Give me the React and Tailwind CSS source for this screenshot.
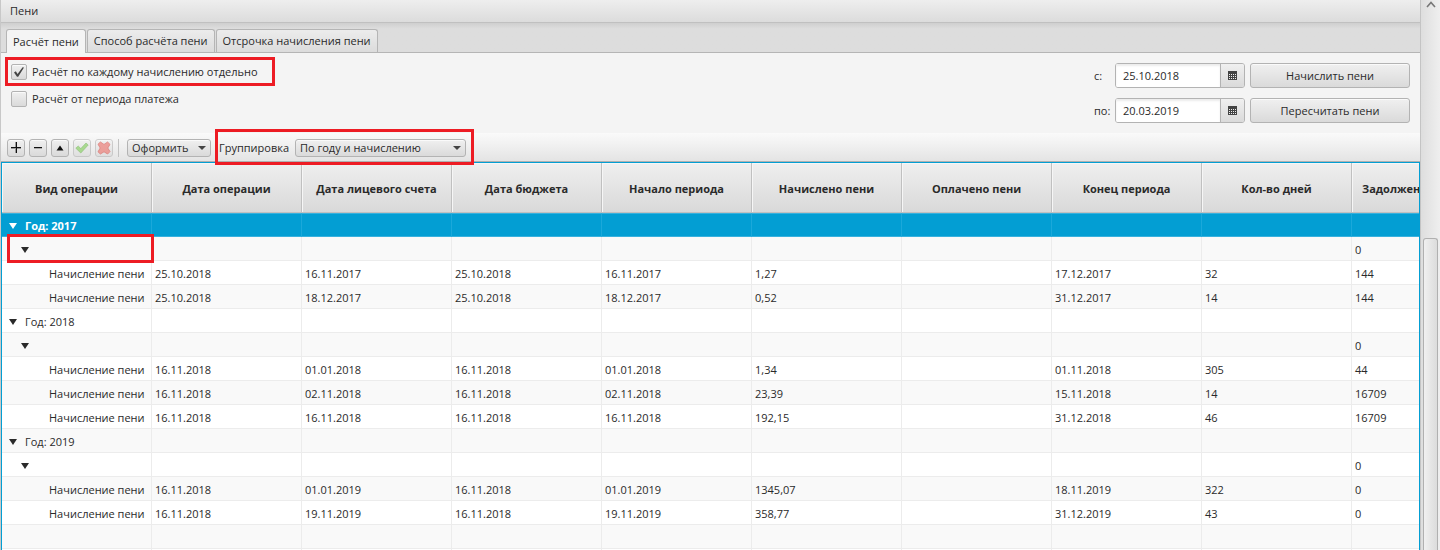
import { useState } from "react";

const columns = [
  "Вид операции",
  "Дата операции",
  "Дата лицевого счета",
  "Дата бюджета",
  "Начало периода",
  "Начислено пени",
  "Оплачено пени",
  "Конец периода",
  "Кол-во дней",
  "Задолженность",
];

const op = "Начисление пени";
const rows = [
  { kind: "year", label: "Год: 2017", selected: true },
  { kind: "group", marked: true },
  { kind: "item", cells: ["25.10.2018", "16.11.2017", "25.10.2018", "16.11.2017", "1,27", "", "17.12.2017", "32", "144"] },
  { kind: "item", cells: ["25.10.2018", "18.12.2017", "25.10.2018", "18.12.2017", "0,52", "", "31.12.2017", "14", "144"] },
  { kind: "year", label: "Год: 2018" },
  { kind: "group" },
  { kind: "item", cells: ["16.11.2018", "01.01.2018", "16.11.2018", "01.01.2018", "1,34", "", "01.11.2018", "305", "44"] },
  { kind: "item", cells: ["16.11.2018", "02.11.2018", "16.11.2018", "02.11.2018", "23,39", "", "15.11.2018", "14", "16709"] },
  { kind: "item", cells: ["16.11.2018", "16.11.2018", "16.11.2018", "16.11.2018", "192,15", "", "31.12.2018", "46", "16709"] },
  { kind: "year", label: "Год: 2019" },
  { kind: "group" },
  { kind: "item", cells: ["16.11.2018", "01.01.2019", "16.11.2018", "01.01.2019", "1345,07", "", "18.11.2019", "322", "0"] },
  { kind: "item", cells: ["16.11.2018", "19.11.2019", "16.11.2018", "19.11.2019", "358,77", "", "31.12.2019", "43", "0"] },
  { kind: "empty" },
  { kind: "empty" },
];

const face = "border border-[#b3b3b3] bg-linear-to-b from-[#f0f0f0] to-[#dadada] shadow-[inset_0_1px_0_#fafafa]";

function Highlight({ className }) {
  return <span aria-hidden="true" className={`pointer-events-none absolute z-10 border-3 border-[#ed1c24] ${className}`} />;
}

function Down({ className = "" }) {
  return (
    <svg width="8" height="6" viewBox="0 0 8 6" className={className} aria-hidden="true">
      <path d="M0 0h8L4 6z" fill="currentColor" />
    </svg>
  );
}

function SmallDown({ className = "" }) {
  return (
    <svg width="8" height="4" viewBox="0 0 8 4" className={className} aria-hidden="true">
      <path d="M0 0h8L4 4z" fill="currentColor" />
    </svg>
  );
}

function CheckRow({ id, label, checked, onChange, marked }) {
  return (
    <div className="relative flex h-[27px] items-center gap-[5px] self-start">
      <span className="relative flex size-4">
        <input
          id={id}
          type="checkbox"
          checked={checked}
          onChange={onChange}
          className={`size-4 appearance-none rounded-[2px] ${face}`}
        />
        {checked && (
          <svg viewBox="0 0 16 16" className="pointer-events-none absolute inset-0 size-4" aria-hidden="true">
            <path d="M3 8.4 4.8 7.2 6.6 10 11.6 3.2 13 3.6 7.2 12.8H6z" fill="#444" />
          </svg>
        )}
      </span>
      <label htmlFor={id} className="min-w-[232px]">{label}</label>
      {marked && <Highlight className="-top-px -right-[11px] bottom-[-1px] -left-[6px]" />}
    </div>
  );
}

function DateField({ id, label, value }) {
  return (
    <div className="flex items-center">
      <label htmlFor={id} className="w-[21px]">{label}</label>
      <div className="flex h-[25px] w-[130px] overflow-hidden rounded-[3px] border border-[#b3b3b3]">
        <input
          id={id}
          defaultValue={value}
          className="min-w-0 flex-1 bg-white px-[7px] shadow-[inset_0_2px_2px_#ececec] outline-none"
        />
        <button aria-label="Календарь" className="flex w-6 items-center justify-center border-l border-[#b3b3b3] bg-linear-to-b from-[#f0f0f0] to-[#dadada]">
          <svg width="9" height="9" viewBox="0 0 9 9" shapeRendering="crispEdges" aria-hidden="true">
            <path d="M0 0h9v9H0z" fill="#444" />
            <path d="M1 3h1v1H1zM3 3h1v1H3zM5 3h1v1H5zM7 3h1v1H7zM1 5h1v1H1zM3 5h1v1H3zM5 5h1v1H5zM7 5h1v1H7zM1 7h1v1H1zM3 7h1v1H3zM5 7h1v1H5zM7 7h1v1H7z" fill="#eee" />
          </svg>
        </button>
      </div>
    </div>
  );
}

function ToolButton({ label, disabled, children }) {
  return (
    <button aria-label={label} disabled={disabled} className={`flex size-[18px] items-center justify-center rounded-[3px] disabled:opacity-60 ${face}`}>
      {children}
    </button>
  );
}

function Row({ row }) {
  const cells = row.cells ?? ["", "", "", "", "", "", "", "", row.kind === "group" ? "0" : ""];
  const line = row.selected
    ? "border-r border-y border-r-[#1ba8da] border-y-[#37b1de] pt-px"
    : "border-r border-b border-[#ececec] pt-[2px]";
  return (
    <tr className={row.selected ? "h-6 bg-[#039ed3] font-bold text-white" : "h-6 odd:bg-white even:bg-[#f9f9f9]"}>
      <td className={`relative px-0 pb-0 whitespace-nowrap ${line}`}>
        <div className="flex items-center">
          {row.kind === "year" && (
            <>
              <Down className="mr-2 ml-[7px]" />
              {row.label}
            </>
          )}
          {row.kind === "group" && <Down className="ml-[19px]" />}
          {row.kind === "item" && <span className="pl-[47px]">{op}</span>}
        </div>
        {row.marked && <Highlight className="top-[-3px] right-[-3px] bottom-[-3px] left-[5px]" />}
      </td>
      {cells.map((c, i) => (
        <td key={i} className={`pr-0 pb-0 pl-[3px] ${line}`}>{c}</td>
      ))}
    </tr>
  );
}

export default function App() {
  const [separate, setSeparate] = useState(true);
  const [byPeriod, setByPeriod] = useState(false);
  const tabs = ["Расчёт пени", "Способ расчёта пени", "Отсрочка начисления пени"];

  return (
    <div className="flex h-screen overflow-hidden bg-[#f4f4f4] font-['Open_Sans',sans-serif] text-[11px] leading-4 text-[#2a2a2a]">
      <main className="flex min-w-0 flex-1 flex-col border-l border-[#c8c8c8]">
        <h1 className="h-[23px] shrink-0 border-b border-[#c0c0c0] bg-linear-to-b from-[#eeeeee] to-[#dcdcdc] px-[9px] pt-[3px]">Пени</h1>

        <div role="tablist" className="flex h-[30px] shrink-0 items-end gap-px border-b border-[#b5b5b5] bg-linear-to-b from-[#cfcfcf] to-[#dddddd] to-20% pl-[5px]">
          {tabs.map((t, i) => (
            <button
              key={t}
              role="tab"
              aria-selected={i === 0}
              className={
                i === 0
                  ? "-mb-px h-6 rounded-t-[3px] border border-b-0 border-[#b5b5b5] bg-[#f4f4f4] px-[6px]"
                  : "h-[23px] rounded-t-[3px] border border-b-0 border-[#b5b5b5] bg-linear-to-b from-[#ececec] to-[#dcdcdc] px-[6px]"
              }
            >
              {t}
            </button>
          ))}
        </div>

        <section className="flex h-20 shrink-0 justify-between px-[10px]">
          <div className="flex flex-col pt-[5px]">
            <CheckRow id="separate" label="Расчёт по каждому начислению отдельно" checked={separate} onChange={() => setSeparate(!separate)} marked />
            <CheckRow id="period" label="Расчёт от периода платежа" checked={byPeriod} onChange={() => setByPeriod(!byPeriod)} />
          </div>
          <div className="flex flex-col gap-[10px] pt-[10px]">
            <div className="flex gap-[5px]">
              <DateField id="from" label="с:" value="25.10.2018" />
              <button className={`h-[25px] w-40 rounded-[3px] ${face}`}>Начислить пени</button>
            </div>
            <div className="flex gap-[5px]">
              <DateField id="to" label="по:" value="20.03.2019" />
              <button className={`h-[25px] w-40 rounded-[3px] ${face}`}>Пересчитать пени</button>
            </div>
          </div>
        </section>

        <div className="flex h-[29px] shrink-0 items-center border-b border-[#b0b0b0] bg-linear-to-b from-[#fafafa] to-[#e4e4e4] pt-px pl-[6px]">
          <div className="flex gap-1">
            <ToolButton label="Добавить">
              <svg width="12" height="12" viewBox="0 0 12 12" className="shrink-0" shapeRendering="crispEdges"><path d="M5 0h1v11H5zM1 6h10v1H1z" fill="#999" /><path d="M1 5h10v1H1zM6 0h1v11H6z" fill="#111" /></svg>
            </ToolButton>
            <ToolButton label="Удалить">
              <svg width="12" height="12" viewBox="0 0 12 12" className="shrink-0" shapeRendering="crispEdges"><path d="M2 5h8v1H2z" fill="#111" /><path d="M2 6h8v1H2z" fill="#aaa" /></svg>
            </ToolButton>
            <ToolButton label="Вверх">
              <svg width="12" height="12" viewBox="0 0 12 12"><path d="M6 3.5 9.5 8.5h-7z" fill="#111" /></svg>
            </ToolButton>
            <ToolButton label="Принять" disabled>
              <svg width="14" height="14" viewBox="0 0 14 14" className="shrink-0"><path d="M.8 7.2 3.2 5l2.6 2.6L11 2l2.2 2-7.4 8z" fill="#7bcb52" stroke="#4b9f2b" strokeWidth=".6" /></svg>
            </ToolButton>
            <ToolButton label="Отменить" disabled>
              <svg width="14" height="14" viewBox="0 0 14 14" className="shrink-0"><path d="M1 3.2 3.4 1 7 3.4 10.6 1 13 3.4 10.8 7l2.2 3.6-2.4 2.4L7 10.8 3.4 13 1 10.8 3.2 7z" fill="#ea6b63" stroke="#d23a33" strokeWidth=".8" /></svg>
            </ToolButton>
          </div>
          <span className="mr-2 ml-[5px] h-[18px] w-px bg-[#c2c2c2]" />
          <button className={`flex h-[18px] w-[84px] items-center justify-between rounded-[3px] px-1 ${face}`}>
            Оформить <SmallDown className="text-[#444]" />
          </button>
          <div className="relative ml-2 flex items-center gap-1">
            <label htmlFor="grouping" className="w-[72px]">Группировка</label>
            <span className="relative flex items-center">
              <select id="grouping" className={`h-[18px] w-[171px] appearance-none rounded-[3px] pl-1 leading-4 ${face}`}>
                <option>По году и начислению</option>
              </select>
              <SmallDown className="pointer-events-none absolute right-[5px] text-[#444]" />
            </span>
            <Highlight className="-top-[10px] -right-[8px] -bottom-[8px] -left-[4px]" />
          </div>
        </div>

        <div className="min-h-0 flex-1 overflow-hidden border-x border-t border-[#039ed3] bg-white">
          <table className="w-[1500px] table-fixed border-separate border-spacing-0">
            <thead>
              <tr className="h-[50px]">
                {columns.map((c, i) => (
                  <th
                    key={c}
                    className={`border-r border-b border-[#c0c0c0] bg-linear-to-b from-[#efefef] to-[#d9d9d9] pt-[2px] pr-0 pb-0 font-bold shadow-[inset_1px_1px_0_#f6f6f6] ${i === 9 ? "pl-[10px] text-left" : "pl-0 text-center"}`}
                  >
                    {c}
                  </th>
                ))}
              </tr>
            </thead>
            <tbody>
              {rows.map((r, i) => (
                <Row key={i} row={r} />
              ))}
            </tbody>
          </table>
        </div>
      </main>

      <aside aria-hidden="true" className="flex w-5 shrink-0 flex-col items-center border-l border-[#c4c4c4] bg-linear-to-r from-[#dedede] to-[#efefef]">
        <svg width="12" height="12" viewBox="0 0 12 12" className="shrink-0"><path d="m2 7 4-4.5L10 7" fill="none" stroke="#777" strokeWidth="1.6" /></svg>
        <div className="mt-[226px] w-[15px] flex-1 rounded-t-[3px] border border-b-0 border-[#b0b0b0] bg-linear-to-r from-[#f0f0f0] to-[#dcdcdc]" />
      </aside>
    </div>
  );
}
